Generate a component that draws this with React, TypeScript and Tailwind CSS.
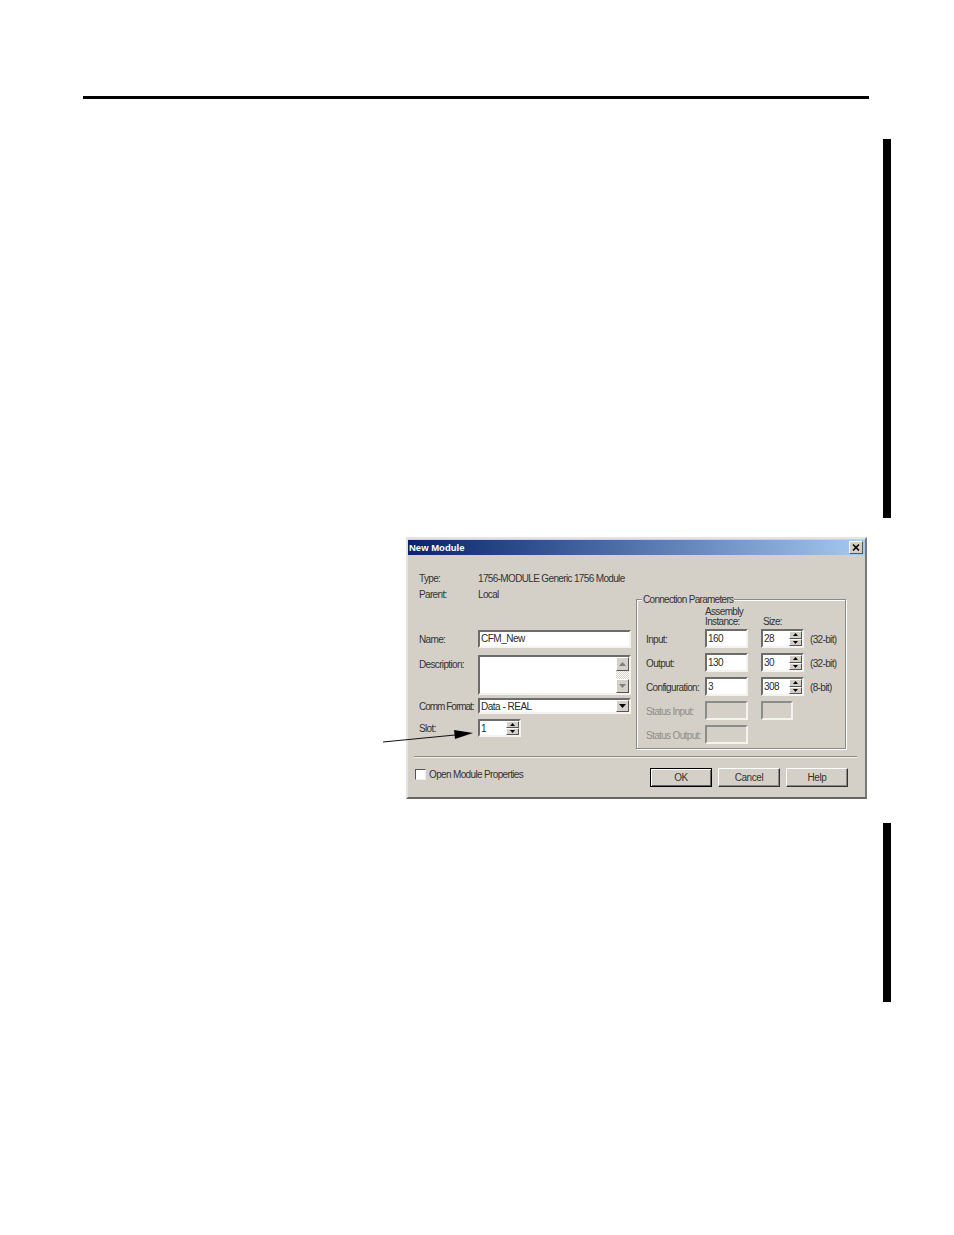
const font = "font-['Liberation_Sans',Arial,sans-serif]";

function Tri({ down, size = 5, color = "#000" }: { down?: boolean; size?: number; color?: string }) {
  return (
    <svg width={size} height={Math.ceil(size / 2)} viewBox="0 0 6 3" className="block" preserveAspectRatio="none">
      <path d={down ? "M0 0H6L3 3Z" : "M0 3H6L3 0Z"} fill={color} />
    </svg>
  );
}

function Raised({ className = "", children }: { className?: string; children?: React.ReactNode }) {
  return (
    <div
      className={`flex items-center justify-center bg-[#d4d0c8] border border-t-white border-l-white border-r-[#555] border-b-[#555] ${className}`}
    >
      {children}
    </div>
  );
}

function Sunken({
  className = "",
  disabled,
  children,
}: {
  className?: string;
  disabled?: boolean;
  children?: React.ReactNode;
}) {
  return (
    <div
      className={`flex border-2 border-r-[#f4f3f0] border-b-[#f4f3f0] ${
        disabled ? "border-t-[#8c8c88] border-l-[#8c8c88] bg-[#d4d0c8]" : "border-t-[#6c6c6c] border-l-[#6c6c6c] bg-white"
      } ${className}`}
    >
      {children}
    </div>
  );
}

function FieldText({ className = "", children }: { className?: string; children: React.ReactNode }) {
  return (
    <span className={`pl-px text-[10px] leading-[12px] tracking-[-0.5px] whitespace-nowrap text-[#2a2a2a] ${className}`}>
      {children}
    </span>
  );
}

function Spin({ className, value }: { className: string; value: string }) {
  return (
    <Sunken className={className}>
      <FieldText className="flex-1 pt-[2px]">{value}</FieldText>
      <div className="flex w-[13px] flex-col">
        <Raised className="flex-1">
          <Tri size={5} />
        </Raised>
        <Raised className="flex-1">
          <Tri down size={5} />
        </Raised>
      </div>
    </Sunken>
  );
}

function Label({
  className = "",
  muted,
  children,
}: {
  className?: string;
  muted?: boolean;
  children: React.ReactNode;
}) {
  return (
    <span
      className={`translate-y-px text-[10px] tracking-[-0.65px] whitespace-nowrap ${
        muted ? "text-[#8f8d88]" : "text-[#333]"
      } ${className}`}
    >
      {children}
    </span>
  );
}

function ParamRow({
  name,
  value,
  size,
  unit,
  mt,
}: {
  name: string;
  value: string;
  size: string;
  unit: string;
  mt: string;
}) {
  return (
    <div className={`flex items-center ${mt}`}>
      <Label className="w-[59px] leading-[12px]">{name}</Label>
      <Sunken className="h-[19px] w-[43px]">
        <FieldText className="pt-[2px]">{value}</FieldText>
      </Sunken>
      <Spin className="ml-[13px] h-[19px] w-[43px]" value={size} />
      <Label className="ml-[6px] leading-[12px]">{unit}</Label>
    </div>
  );
}

function DialogButton({ label, isDefault }: { label: string; isDefault?: boolean }) {
  return (
    <div
      className={`flex h-[19px] w-[62px] items-center justify-center border text-[10px] tracking-[-0.4px] text-[#333] ${
        isDefault
          ? "border-black shadow-[inset_1px_1px_0_#fff,inset_-1px_-1px_0_#666]"
          : "border-t-white border-l-white border-r-[#333] border-b-[#333] shadow-[inset_-1px_-1px_0_#888]"
      }`}
    >
      {label}
    </div>
  );
}

function NewModuleDialog() {
  return (
    <div className="relative flex h-[262px] w-[461px] flex-col border-2 border-t-[#e6e4df] border-l-[#e6e4df] border-r-[#777] border-b-[#666] bg-[#d4d0c8] pt-px">
      {/* Title bar */}
      <div className="flex h-[15px] items-center justify-between bg-gradient-to-r from-[#0a246a] to-[#a6caf0] pl-px pr-[2px]">
        <span className="text-[9.5px] font-bold leading-none text-white">New Module</span>
        <Raised className="h-[13px] w-[14px] border-r-[#333] border-b-[#333]">
          <svg width="8" height="7" viewBox="0 0 8 7">
            <path d="M1 0.5L7 6.5M7 0.5L1 6.5" stroke="#000" strokeWidth="1.5" />
          </svg>
        </Raised>
      </div>

      <div className="flex pl-[11px]">
        {/* Left column */}
        <div className="flex w-[212px] flex-col pt-[15px]">
          <div className="flex h-[16px] items-center">
            <Label className="w-[59px] leading-[12px]">Type:</Label>
            <Label className="leading-[12px]">1756-MODULE Generic 1756 Module</Label>
          </div>
          <div className="flex h-[16px] items-center">
            <Label className="w-[59px] leading-[12px]">Parent:</Label>
            <Label className="leading-[12px]">Local</Label>
          </div>
          <div className="mt-[28px] flex items-center">
            <Label className="w-[59px] leading-[12px]">Name:</Label>
            <Sunken className="h-[18px] w-[153px]">
              <FieldText className="pt-px">CFM_New</FieldText>
            </Sunken>
          </div>
          <div className="mt-[7px] flex items-start">
            <Label className="w-[59px] pt-[3px] leading-[12px]">Description:</Label>
            <Sunken className="h-[40px] w-[153px]">
              <div className="flex-1" />
              <div className="flex w-[13px] flex-col justify-between bg-[repeating-conic-gradient(#fff_0_25%,#d4d0c8_0_50%)] bg-[length:2px_2px]">
                <Raised className="h-[14px]">
                  <Tri size={7} color="#808080" />
                </Raised>
                <Raised className="h-[14px]">
                  <Tri down size={7} color="#808080" />
                </Raised>
              </div>
            </Sunken>
          </div>
          <div className="mt-[3px] flex items-center">
            <Label className="w-[59px] leading-[12px]">
              <span className="tracking-[-1px]">Comm Format:</span>
            </Label>
            <Sunken className="h-[16px] w-[153px]">
              <FieldText className="flex-1 pt-px">Data - REAL</FieldText>
              <Raised className="w-[13px]">
                <Tri down size={7} />
              </Raised>
            </Sunken>
          </div>
          <div className="mt-[5px] flex items-center">
            <Label className="w-[59px] leading-[12px]">Slot:</Label>
            <Spin className="h-[18px] w-[43px]" value="1" />
          </div>
        </div>

        {/* Connection Parameters group */}
        <div className="relative ml-[5px] mt-[44px] h-[150px] w-[210px] border border-[#8a8a86] pl-[9px] shadow-[inset_1px_1px_0_#fff,1px_1px_0_#fff]">
          <span className="absolute -top-[6px] left-[5px] bg-[#d4d0c8] px-px text-[10px] leading-[12px] tracking-[-0.7px] whitespace-nowrap text-[#333]">
            Connection Parameters
          </span>
          <div className="flex h-[29px] items-end pb-[3px]">
            <Label className="ml-[59px] w-[56px] leading-[10px]">
              Assembly
              <br />
              Instance:
            </Label>
            <Label className="ml-[2px] leading-[10px]">Size:</Label>
          </div>
          <ParamRow name="Input:" value="160" size="28" unit="(32-bit)" mt="mt-0" />
          <ParamRow name="Output:" value="130" size="30" unit="(32-bit)" mt="mt-[5px]" />
          <ParamRow name="Configuration:" value="3" size="308" unit="(8-bit)" mt="mt-[5px]" />
          <div className="mt-[5px] flex items-center">
            <Label muted className="w-[59px] leading-[12px]">Status Input:</Label>
            <Sunken disabled className="h-[19px] w-[43px]" />
            <Sunken disabled className="ml-[13px] h-[19px] w-[32px]" />
          </div>
          <div className="mt-[5px] flex items-center">
            <Label muted className="w-[59px] leading-[12px]">Status Output:</Label>
            <Sunken disabled className="h-[19px] w-[43px]" />
          </div>
        </div>
      </div>

      {/* Separator */}
      <div className="ml-[6px] mt-[7px] h-[2px] w-[443px] border-t border-[#8a8a86] bg-[#f2f1ee]" />

      <div className="mt-[10px] flex items-start pl-[7px] pr-[17px]">
        <div className="flex items-center">
          <div className="h-[11px] w-[11px] border border-t-[#555] border-l-[#555] border-r-[#eee] border-b-[#eee] bg-white" />
          <Label className="ml-[3px] leading-[12px]">Open Module Properties</Label>
        </div>
        <div className="ml-auto flex gap-[6px]">
          <DialogButton label="OK" isDefault />
          <DialogButton label="Cancel" />
          <DialogButton label="Help" />
        </div>
      </div>

      {/* Callout arrow */}
      <svg className="absolute left-[-25px] top-[189px] overflow-visible" width="92" height="16" viewBox="0 0 92 16">
        <path d="M0 14L72 7" stroke="#111" strokeWidth="1" />
        <path d="M71 2L90 5L72 11Z" fill="#000" />
      </svg>
    </div>
  );
}

export default function App() {
  return (
    <div className={`h-[1235px] w-[954px] overflow-hidden bg-white ${font}`}>
      <div className="ml-[83px] mt-[96px] h-[3px] w-[786px] bg-black" />
      <div className="flex">
        <div className="ml-[406px] mt-[438px] w-[477px]">
          <NewModuleDialog />
        </div>
        <div className="flex w-[8px] flex-col">
          <div className="mt-[40px] h-[379px] bg-black" />
          <div className="mt-[305px] h-[179px] bg-black" />
        </div>
      </div>
    </div>
  );
}
